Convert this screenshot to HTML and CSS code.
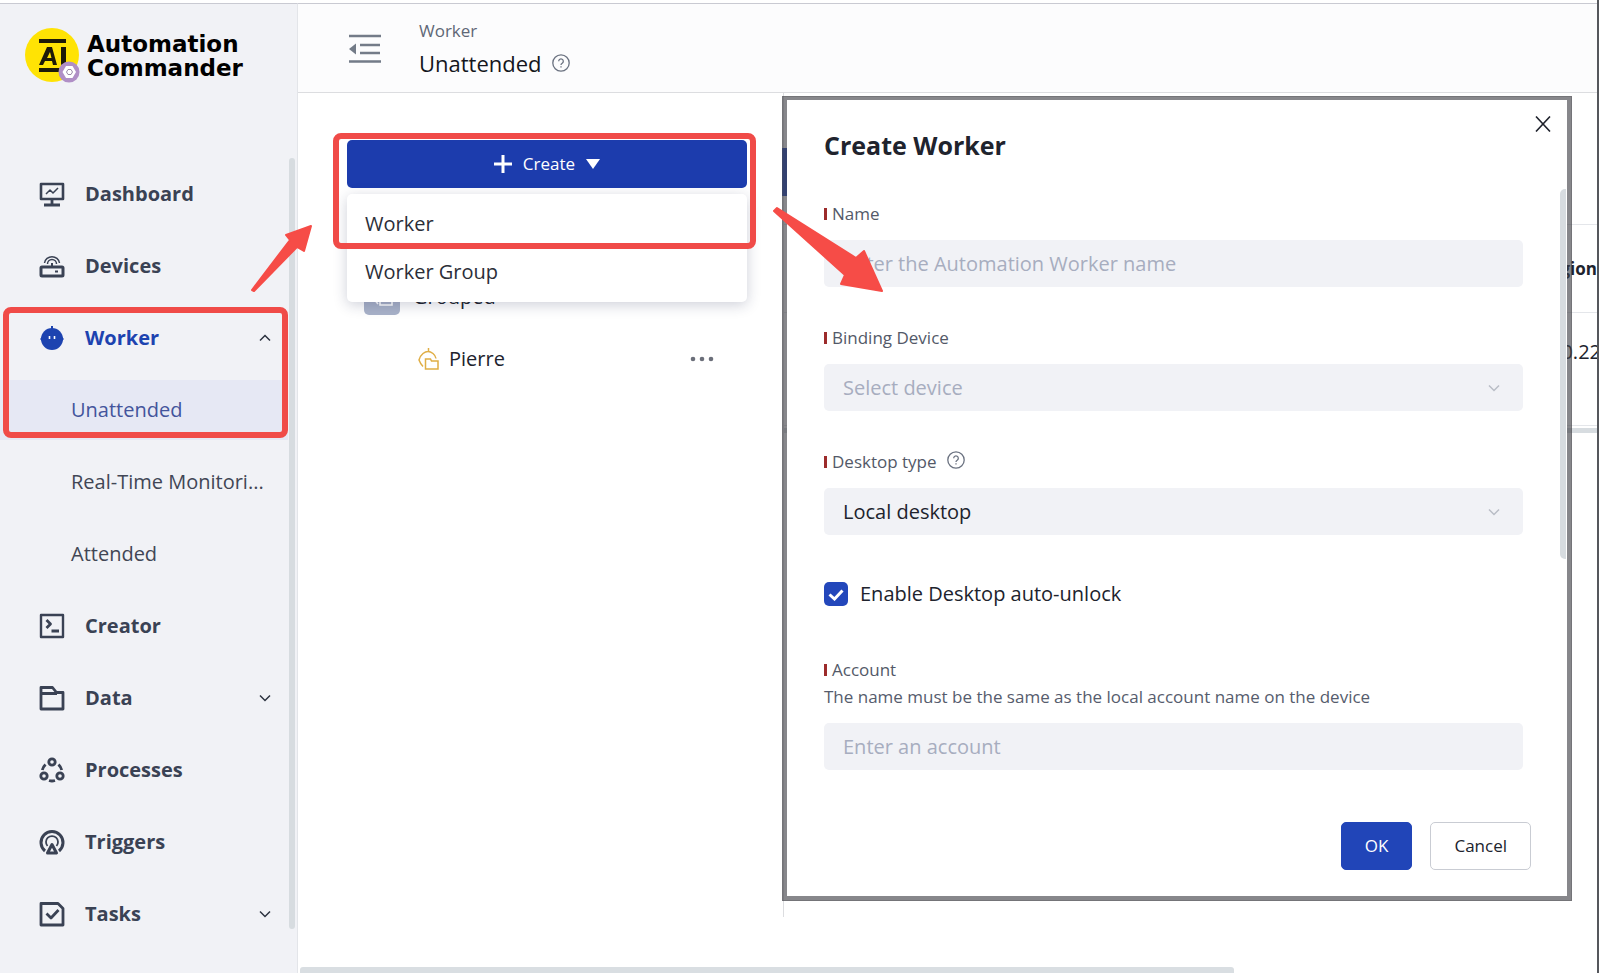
FILE: index.html
```html
<!DOCTYPE html>
<html lang="en">
<head>
<meta charset="utf-8">
<meta name="viewport" content="width=device-width, initial-scale=1">
<title>Automation Commander</title>
<link rel="stylesheet" href="styles.css">
</head>
<body>
<div class="app">
  <aside class="sidebar">
    <div class="brand">
      <svg class="brand-mark" viewBox="0 0 56 58" aria-hidden="true">
        <circle cx="27" cy="28" r="27" fill="#ffe304"/>
        <g fill="#1d1a08">
          <rect x="14" y="12" width="27" height="4"/>
          <rect x="14" y="41" width="22" height="4"/>
          <path d="M14 38 22 20h5l5 18h-4l-1-4h-7l-2 4zM22 31h4.500l-1.500-6zM36 20h5v18h-5z"/>
        </g>
        <circle cx="44" cy="45" r="10.500" fill="#b08fc6"/>
        <path d="M37.500 45 41 39h6.500l3.500 6-3.500 6H41z" fill="#fff"/>
        <path d="m41.500 45 1.500-2.500h3l1.500 2.500-1.500 2.500h-3z" fill="none" stroke="#9b8aa8"/>
      </svg>
      <div class="brand-name">Automation<br>Commander</div>
    </div>
    <div class="nav-wrap">
      <nav class="nav">
        <a class="nav-item" href="#">
          <svg class="ico" viewBox="0 0 26 26"><path d="M2 3h22v15H2z" stroke-width="2.600"/><path d="M13 18v5M5 24h16" stroke-width="2.800"/><path d="m7 13 4-4 3 3 5-5" stroke-width="1.500"/></svg>
          <span>Dashboard</span></a>
        <a class="nav-item" href="#">
          <svg class="ico" viewBox="0 0 26 26"><rect x="2" y="14" width="22" height="9" rx="1" stroke-width="3"/><path d="M16 18.500h3M13 13v-3" stroke-width="2"/><path d="M5.500 10a7.600 7.600 0 0 1 15 0M8.500 11a4.500 4.500 0 0 1 9 0" stroke-width="1.500"/></svg>
          <span>Devices</span></a>
        <a class="nav-item open" href="#">
          <svg class="ico" viewBox="0 0 26 26"><path d="M13 1v5" stroke-width="2"/><path d="M1 14l3-3h18l3 3-3 3H4z" fill="currentColor" stroke="none"/><circle cx="13" cy="14" r="11" fill="currentColor" stroke="none"/><path d="M10.500 11v3M15.500 11v3" stroke="#fff" stroke-width="1.600"/></svg>
          <span>Worker</span>
          <svg class="chev" viewBox="0 0 12 8"><path d="m1 6.500 5-5 5 5"/></svg></a>
        <a class="nav-item sub current" href="#"><span>Unattended</span></a>
        <a class="nav-item sub" href="#"><span>Real-Time Monitori...</span></a>
        <a class="nav-item sub" href="#"><span>Attended</span></a>
        <a class="nav-item" href="#">
          <svg class="ico" viewBox="0 0 26 26"><path d="M2 2h22v22H2z" stroke-width="2.400"/><path d="m7.500 7 4 4-4 4M12.500 18H20" stroke-width="2.800"/></svg>
          <span>Creator</span></a>
        <a class="nav-item" href="#">
          <svg class="ico" viewBox="0 0 26 26"><path d="M2 2.500h11.500l4 5H24V24H2zM2 8.500h16" stroke-width="2.800"/></svg>
          <span>Data</span>
          <svg class="chev" viewBox="0 0 12 8"><path d="m1 1.500 5 5 5-5"/></svg></a>
        <a class="nav-item" href="#">
          <svg class="ico" viewBox="0 0 26 26"><circle cx="13" cy="5" r="3.200" stroke-width="2.800"/><circle cx="5" cy="19" r="3.200" stroke-width="2.800"/><circle cx="21" cy="19" r="3.200" stroke-width="2.800"/><path d="M6.500 7.500Q4 10 3.300 13M19.500 7.500Q22 10 22.700 13M10 23.500q3 1 6 0" stroke-width="2.800"/></svg>
          <span>Processes</span></a>
        <a class="nav-item" href="#">
          <svg class="ico" viewBox="0 0 26 26"><path d="M6 22a11 11 0 1 1 14 0" stroke-width="3"/><path d="M8.500 17a6 6 0 1 1 9 0" stroke-width="1.800"/><path d="M8.500 24 13 15.500 17.500 24z" stroke-width="3"/></svg>
          <span>Triggers</span></a>
        <a class="nav-item" href="#">
          <svg class="ico" viewBox="0 0 26 26"><path d="M2 2.500h17l5 5V24H2z" stroke-width="2.800"/><path d="m7.500 12.500 4.500 4.500 7.500-8" stroke-width="2.800"/></svg>
          <span>Tasks</span>
          <svg class="chev" viewBox="0 0 12 8"><path d="m1 1.500 5 5 5-5"/></svg></a>
      </nav>
      <div class="side-scroll"></div>
    </div>
    <div class="mark mark-side"></div>
  </aside>

  <main class="main">
    <header class="topbar">
      <button class="icon-btn" type="button" aria-label="Collapse menu">
        <svg class="fold" viewBox="0 0 34 30"><path d="M1 2h32M12 11h20M12 19h20M1 27.500h32" stroke="#737b88" stroke-width="2.600" fill="none"/><path d="M8 9.500v11L1 15z" fill="#737b88"/></svg>
      </button>
      <div class="heading">
        <div class="crumb">Worker</div>
        <h1 class="page-title">Unattended
          <svg class="help" viewBox="0 0 18 18"><circle cx="9" cy="9" r="8.200"/><path d="M6.700 7.200a2.300 2.300 0 1 1 3.500 2Q9 9.900 9 11M9 12.300v1.300"/></svg></h1>
      </div>
    </header>

    <div class="content">
      <section class="tree">
        <div class="create">
          <button class="create-btn" type="button">
            <svg class="plus" viewBox="0 0 18 18"><path d="M9 0v18M0 9h18"/></svg>
            <span>Create</span>
            <svg class="caret" viewBox="0 0 14 10"><path d="M0 0h14L7 10z"/></svg>
          </button>
          <div class="menu">
            <button class="menu-item" type="button">Worker</button>
            <button class="menu-item" type="button">Worker Group</button>
          </div>
          <div class="mark mark-create"></div>
        </div>
        <div class="tree-row">
          <svg class="group-ico" viewBox="0 0 36 36"><rect width="36" height="36" rx="5" fill="#a9b2c9"/><path d="M16 17h12v9H16zM10 20l4 5" fill="none" stroke="#fff" stroke-width="1.600"/></svg>
          <span>Grouped</span>
        </div>
        <div class="tree-row child">
          <svg class="bot-ico" viewBox="0 0 22 22"><path d="M10.500 0v3M5 18.500Q2.500 16 1 12q1-4 4-6.500 5-4 10 0 2.500 2 3 5M7.500 11h5l1 2h6.500v8H7.500z" fill="none" stroke="#e0ae45" stroke-width="1.500"/></svg>
          <span class="grow">Pierre</span>
          <button class="more" type="button" aria-label="More actions"><svg class="dots" viewBox="0 0 24 6"><circle cx="3" cy="3" r="2.300"/><circle cx="12" cy="3" r="2.300"/><circle cx="21" cy="3" r="2.300"/></svg></button>
        </div>
      </section>
      <section class="list">
        <button class="list-btn" type="button" aria-label="Add"></button>
        <table class="table">
          <thead><tr><th>gion</th></tr></thead>
          <tbody><tr><td>0.22</td></tr></tbody>
        </table>
        <div class="table-scroll"></div>
      </section>
    </div>
    <div class="main-scroll"></div>
  </main>

  <form class="modal">
    <div class="modal-head">
      <h2 class="modal-title">Create Worker</h2>
      <button class="close" type="button" aria-label="Close"><svg class="close-ico" viewBox="0 0 16 16"><path d="M1 .5 15 15.500M15 .5 1 15.500"/></svg></button>
    </div>
    <div class="fields">
      <div class="field">
        <label class="label req" for="name">Name</label>
        <input class="control" id="name" type="text" placeholder="Enter the Automation Worker name">
      </div>
      <div class="field">
        <label class="label req" for="device">Binding Device</label>
        <div class="select-box">
          <select class="control unset" id="device"><option>Select device</option></select>
          <svg class="chev" viewBox="0 0 12 8"><path d="m1 1.500 5 5 5-5"/></svg>
        </div>
      </div>
      <div class="field">
        <label class="label req" for="type">Desktop type
          <svg class="help" viewBox="0 0 18 18"><circle cx="9" cy="9" r="8.200"/><path d="M6.700 7.200a2.300 2.300 0 1 1 3.500 2Q9 9.900 9 11M9 12.300v1.300"/></svg></label>
        <div class="select-box">
          <select class="control" id="type"><option>Local desktop</option></select>
          <svg class="chev" viewBox="0 0 12 8"><path d="m1 1.500 5 5 5-5"/></svg>
        </div>
      </div>
      <div class="check">
        <span class="check-box">
          <input class="tick" id="unlock" type="checkbox" checked>
          <svg class="tick-ico" viewBox="0 0 16 12"><path d="m1.500 5.500 5 4.500 8-8.500"/></svg>
        </span>
        <label for="unlock">Enable Desktop auto-unlock</label>
      </div>
      <div class="field">
        <label class="label req" for="account">Account</label>
        <div class="hint">The name must be the same as the local account name on the device</div>
        <input class="control" id="account" type="text" placeholder="Enter an account">
      </div>
      <div class="modal-scroll"></div>
    </div>
    <div class="modal-foot">
      <button class="btn primary" type="button">OK</button>
      <button class="btn" type="button">Cancel</button>
    </div>
  </form>

  <svg class="arrow arrow-menu" viewBox="0 0 64 68"><path d="M2 66 40 16 36 11 61 2 54 27 47 23 4 67z"/></svg>
  <svg class="arrow arrow-modal" viewBox="0 0 114 88"><path d="M3 5 6 2 85 52 93 45 111 85 70 78 74 69z"/></svg>
</div>
</body>
</html>
```
FILE: styles.css
```css
* { box-sizing: border-box; }
body {
  margin: 0;
  font-family: "Open Sans", "Noto Sans", sans-serif;
  font-size: 20px;
  line-height: 24px;
  color: #20232d;
  background: #fff;
}
button, input, select { font: inherit; color: inherit; }
button { border: 0; padding: 0; background: none; cursor: pointer; }
svg { flex: none; display: block; }

.app {
  position: relative;
  display: grid;
  grid-template-columns: 298px minmax(0, 1fr);
  min-height: 100vh;
  padding-top: 3px;
  border-right: 2px solid #55575c;
  overflow: hidden;
}

/* Sidebar */
.sidebar {
  position: relative;
  border-top: 1px solid #c9cad2;
  border-right: 1px solid #e3e5e9;
  background: #f1f2f6;
}
.brand { display: flex; align-items: center; gap: 6px; padding: 23px 0 0 25px; }
.brand-mark { width: 56px; height: 58px; }
.brand-name {
  font: bold 23px/24px "DejaVu Sans", sans-serif;
  color: #000;
}
.nav-wrap { display: flex; padding-top: 73px; }
.nav { flex: 1; }
.nav-item {
  display: flex;
  align-items: center;
  gap: 20px;
  height: 60px;
  margin: 6px 0 12px;
  padding: 0 17px 0 39px;
  font-weight: 700;
  color: #3a4254;
  text-decoration: none;
}
.nav-item span { flex: 1; }
.nav-item.sub { padding-left: 71px; padding-right: 0; font-weight: 400; color: #414655; white-space: nowrap; }
.nav-item.open { color: #1d43b0; }
.nav-item.sub.current { background: #e6e8f4; color: #43549c; }
.ico { width: 26px; height: 26px; fill: none; stroke: currentColor; stroke-linejoin: round; }
.chev { width: 12px; height: 8px; fill: none; stroke: #2c3340; stroke-width: 1.5; }
.side-scroll { width: 6px; height: 771px; margin: 0 2px 0 1px; border-radius: 3px; background: #d7dce0; }

/* Top bar */
.main { display: flex; flex-direction: column; min-width: 0; }
.topbar {
  display: flex;
  align-items: center;
  gap: 37px;
  height: 90px;
  padding: 2px 0 0 50px;
  border-top: 1px solid #c9cad2;
  border-bottom: 1px solid #dcdde0;
  background: #fcfcfd;
}
.icon-btn { width: 34px; height: 30px; }
.fold { width: 34px; height: 30px; }
.crumb { font-size: 17px; line-height: 28px; color: #5f6776; }
.page-title { display: flex; align-items: center; gap: 10px; margin: 0; font-size: 22px; line-height: 36px; font-weight: 400; color: #14161c; }
.help { width: 18px; height: 18px; fill: none; stroke: #6b7280; stroke-width: 1.3; }

/* Content */
.content { flex: 1; display: grid; grid-template-columns: 486px minmax(0, 1fr); align-items: start; }
.tree { height: 824px; padding: 47px 36px 0 49px; border-right: 1px solid #dcdde0; }
.create { position: relative; }
.create-btn {
  display: flex;
  align-items: center;
  justify-content: center;
  gap: 11px;
  width: 100%;
  height: 48px;
  border-radius: 5px;
  background: #1c3cad;
  color: #fff;
  font-size: 17px;
}
.plus { width: 18px; height: 18px; stroke: #fff; stroke-width: 3; }
.caret { width: 14px; height: 10px; fill: #fff; }
.menu {
  position: absolute;
  z-index: 1;
  top: 54px;
  left: 0;
  right: 0;
  padding: 6px 0;
  border-radius: 5px;
  background: #fff;
  box-shadow: 0 3px 14px rgba(30, 40, 80, .22);
}
.menu-item { display: block; width: 100%; height: 48px; padding-left: 18px; text-align: left; color: #2b2e38; }
.tree-row { display: flex; align-items: center; gap: 13px; height: 62px; padding: 0 33px 0 17px; }
.create + .tree-row { margin-top: 78px; }
.tree-row.child { gap: 9px; padding-left: 71px; }
.group-ico { width: 36px; height: 36px; }
.bot-ico { width: 22px; height: 22px; }
.grow { flex: 1; }
.more { width: 24px; height: 24px; }
.dots { width: 24px; height: 6px; fill: #6b6f7a; }

.list { padding-top: 55px; }
.list-btn { display: block; width: 140px; height: 48px; margin-left: -2px; background: #2548b8; }
.table { width: calc(100% + 4px); margin-top: 28px; border-collapse: collapse; }
.table th, .table td { padding: 0; border-top: 1px solid #e4e6ea; text-align: right; white-space: nowrap; }
.table th { height: 88px; padding-right: 4px; font-size: 17px; font-weight: 700; }
.table td { height: 113px; padding-bottom: 34px; border-bottom: 1px solid #e4e6ea; }
.table-scroll { height: 5px; margin-top: 2px; background: #d7dce0; }
.main-scroll { width: 934px; height: 6px; margin-left: 2px; border-radius: 3px 3px 0 0; background: #d9dee2; }

/* Dialog */
.modal {
  position: absolute;
  z-index: 2;
  top: 96px;
  left: 782px;
  right: 25px;
  border: 5px solid rgba(62, 62, 68, .62);
  border-top-width: 4px;
  background: #fff padding-box;
  outline: 1px solid rgba(80, 80, 86, .35);
  outline-offset: -1px;
}
.modal-head { display: flex; align-items: flex-start; justify-content: space-between; padding: 29px 16px 0 37px; }
.modal-title { margin: 0; font-size: 25px; line-height: 32px; font-weight: 700; }
.close { width: 16px; height: 16px; margin-top: -13px; }
.close-ico { width: 16px; height: 16px; stroke: #20232d; stroke-width: 1.6; }
.fields { position: relative; padding: 41px 44px 0 37px; }
.field { margin-bottom: 39px; }
.label { display: flex; align-items: center; gap: 10px; margin-bottom: 14px; font-size: 17px; color: #535968; }
.req::before { content: ""; width: 3px; height: 12px; margin-right: -5px; background: #9c2b2b; }
.label .help { margin-bottom: 4px; }
.control {
  display: block;
  width: 100%;
  height: 47px;
  padding: 0 19px;
  border: 0;
  border-radius: 5px;
  appearance: none;
  background: #f1f2f6;
}
.control::placeholder, .control.unset { color: #a7adbf; opacity: 1; }
.select-box { position: relative; }
.select-box .chev { position: absolute; right: 23px; top: 20px; stroke: #b9bdc6; }
.check { display: flex; align-items: center; gap: 12px; margin: 47px 0 52px; }
.check-box { position: relative; }
.tick { display: block; width: 24px; height: 24px; margin: 0; border-radius: 5px; appearance: none; background: #2347bb; }
.tick-ico { position: absolute; left: 4px; top: 7px; width: 16px; height: 12px; fill: none; stroke: #fff; stroke-width: 3; pointer-events: none; }
.hint { margin: -11px 0 14px; font-size: 17px; color: #565c6d; }
.modal-scroll { position: absolute; top: 28px; right: 1px; width: 6px; height: 370px; border-radius: 5px 0 0 5px; background: #d7dce0; }
.modal-foot { display: flex; justify-content: flex-end; gap: 18px; margin-top: 52px; padding: 0 36px 26px 0; }
.btn { height: 48px; padding: 0 23px; border: 1px solid #c9ccd3; border-radius: 5px; background: #fff; font-size: 17px; }
.btn.primary { border-color: #2145b8; background: #2145b8; color: #fff; }

/* Annotations */
.mark { position: absolute; z-index: 3; border: 6px solid #f04b48; border-radius: 8px; pointer-events: none; }
.mark-side { left: 3px; right: 9px; top: 303px; height: 131px; }
.mark-create { left: -14px; right: -9px; top: -7px; height: 116px; }
.arrow { position: absolute; z-index: 4; fill: #f64c47; stroke: #f64c47; stroke-width: 2; stroke-linejoin: round; pointer-events: none; }
.arrow-menu { left: 250px; top: 224px; width: 64px; height: 68px; }
.arrow-modal { left: 771px; top: 206px; width: 114px; height: 88px; }
```
